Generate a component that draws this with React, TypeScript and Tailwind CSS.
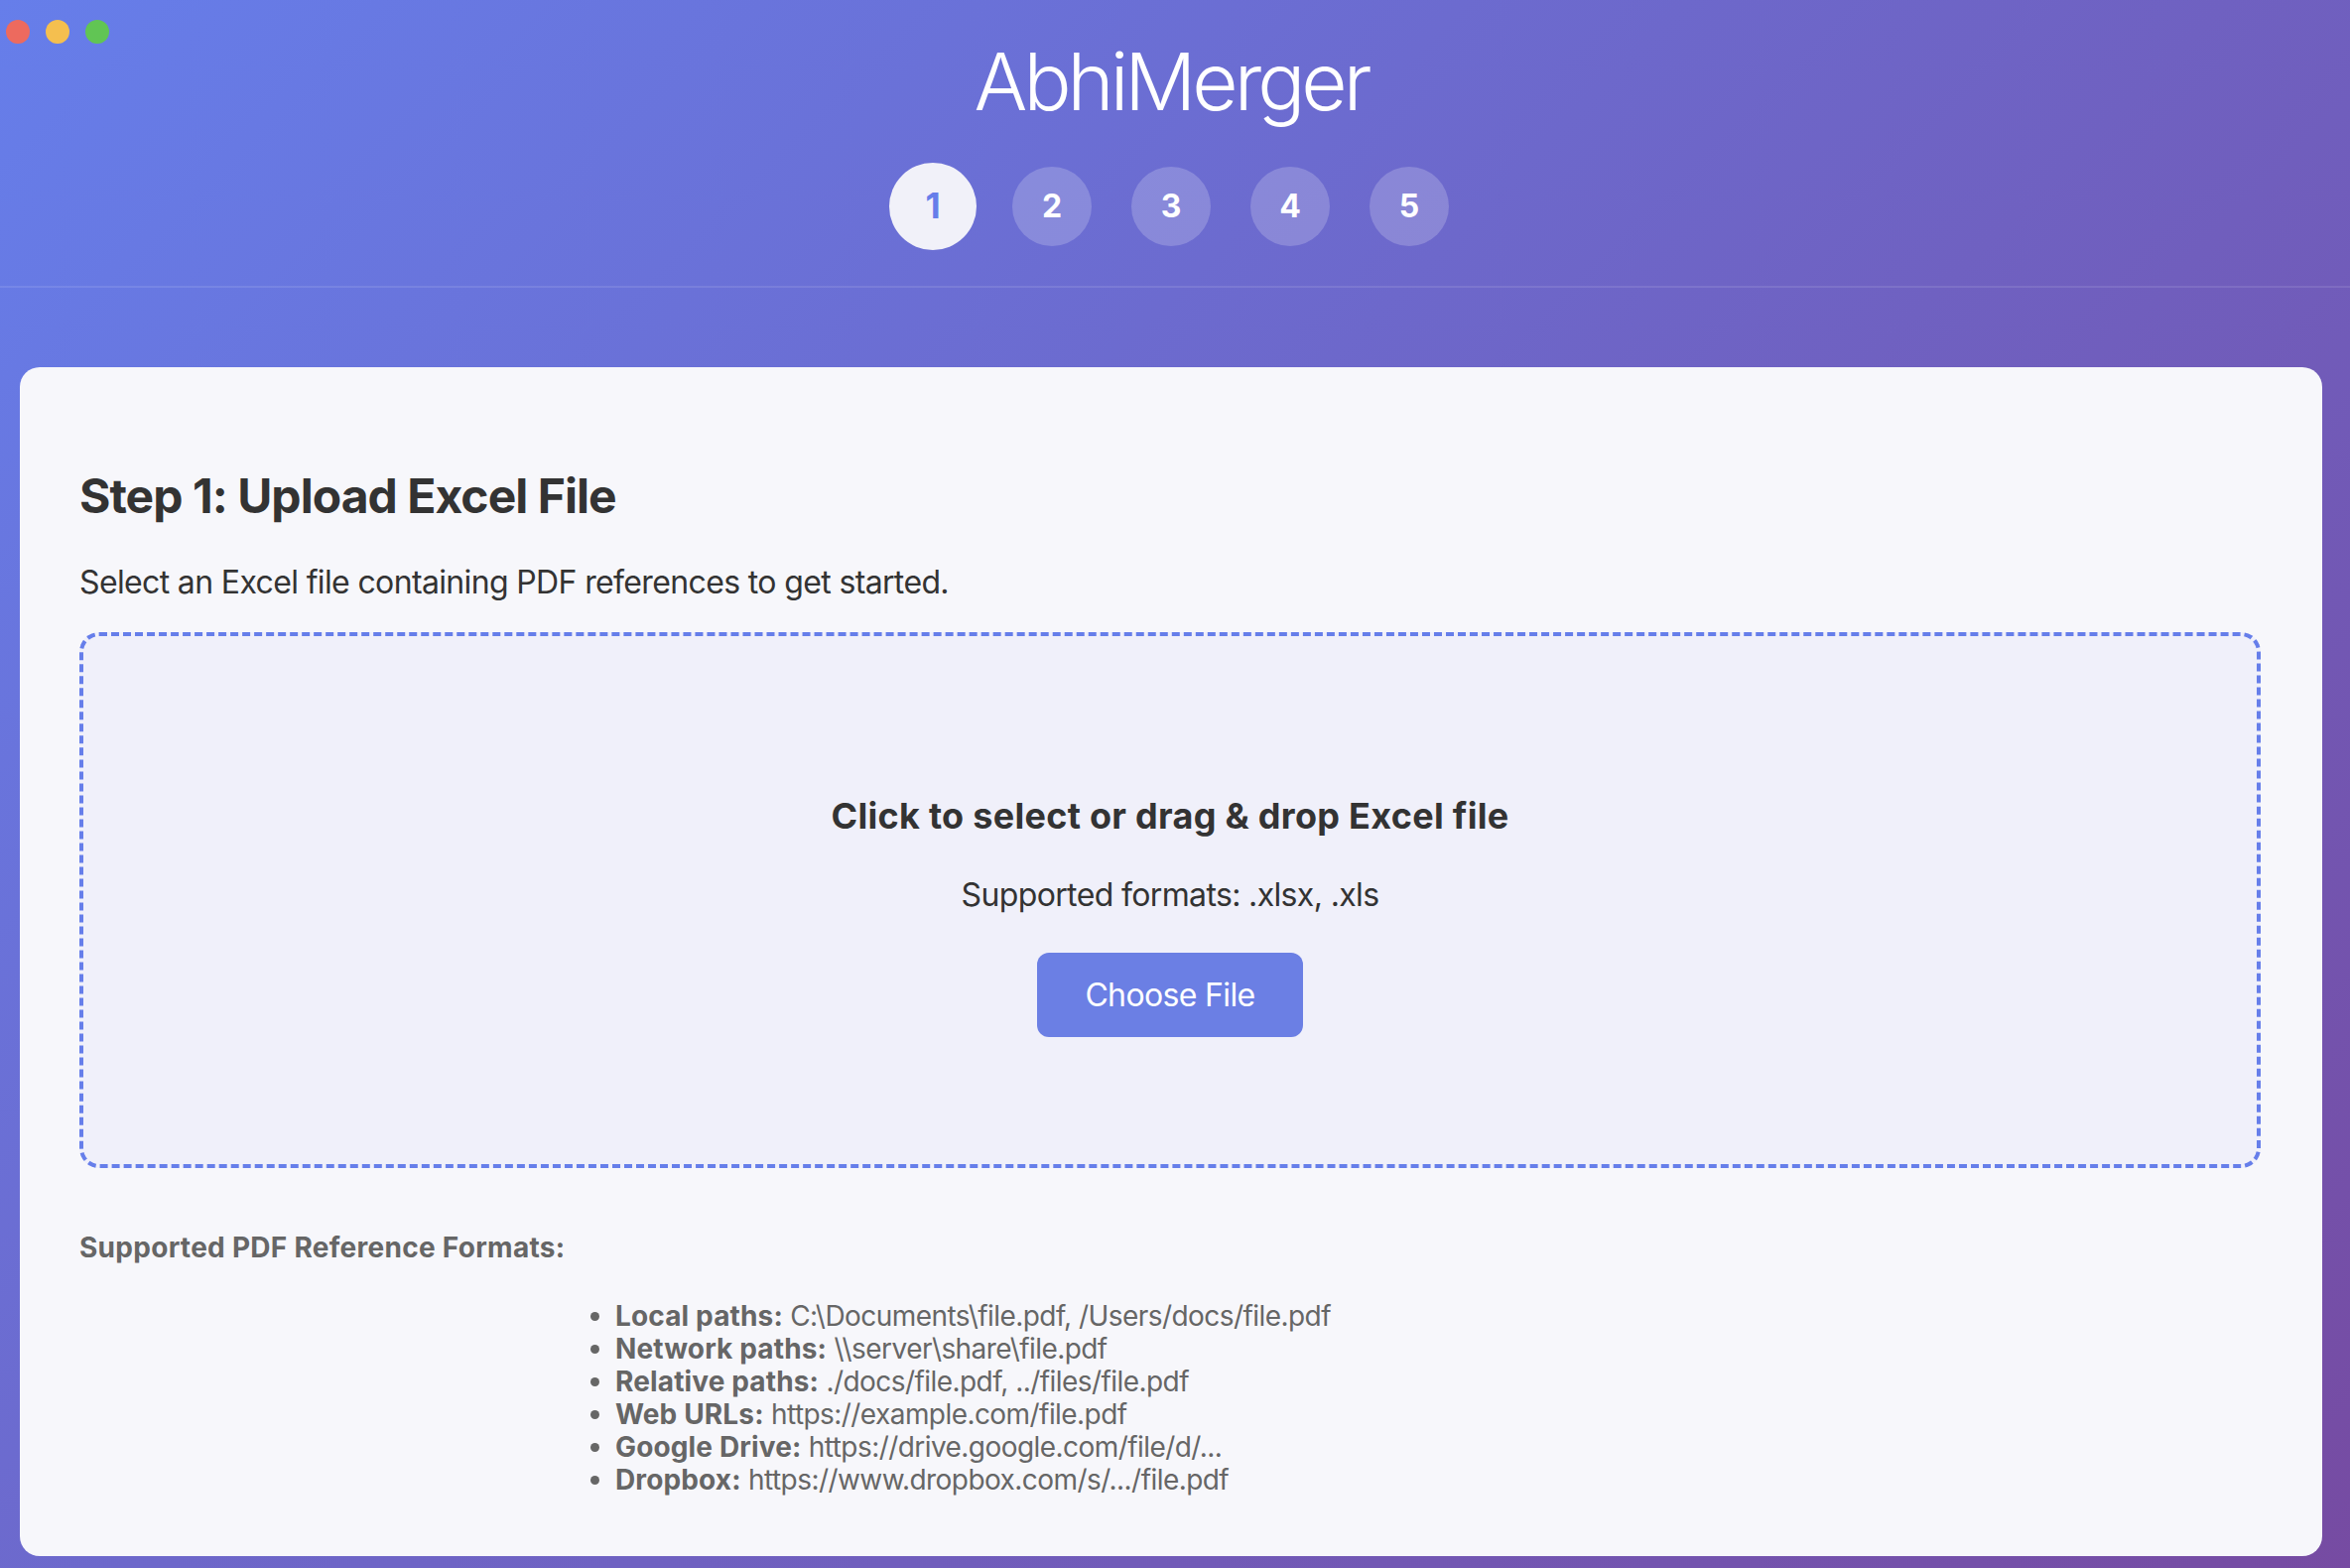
import React from 'react';

// Pasos del asistente
const steps = [1, 2, 3, 4, 5];

// Formatos de referencia soportados
const formats: { label: string; value: string }[] = [
  { label: 'Local paths:', value: 'C:\\Documents\\file.pdf, /Users/docs/file.pdf' },
  { label: 'Network paths:', value: '\\\\server\\share\\file.pdf' },
  { label: 'Relative paths:', value: './docs/file.pdf, ../files/file.pdf' },
  { label: 'Web URLs:', value: 'https://example.com/file.pdf' },
  { label: 'Google Drive:', value: 'https://drive.google.com/file/d/...' },
  { label: 'Dropbox:', value: 'https://www.dropbox.com/s/.../file.pdf' },
];

export default function App() {
  return (
    <div
      className="relative w-full h-[1580px] overflow-hidden bg-[linear-gradient(135deg,#667eea_0%,#764ba2_100%)]"
      style={{ fontFamily: 'Inter, "Noto Sans", sans-serif' }}
    >
      {/* Botones de la ventana */}
      <div className="absolute left-[6px] top-[20px] flex gap-[16px]">
        <span className="w-[24px] h-[24px] rounded-full bg-[#ed6a5e]" />
        <span className="w-[24px] h-[24px] rounded-full bg-[#f5bf4f]" />
        <span className="w-[24px] h-[24px] rounded-full bg-[#61c554]" />
      </div>

      {/* Header */}
      <header className="flex flex-col items-center pr-[8px] pt-[42px] pb-[40px] border-b-2 border-white/10">
        <h1 className="text-[80px] leading-none font-light text-white tracking-[-0.05em]">AbhiMerger</h1>
        <div className="flex gap-[40px] mt-[46px]">
          {steps.map((s) => (
            <div
              key={s}
              className={
                s === 1
                  ? 'w-[80px] h-[80px] rounded-full flex items-center justify-center text-[32px] font-bold bg-[#f1f1f9] text-[#667eea] scale-110'
                  : 'w-[80px] h-[80px] rounded-full flex items-center justify-center text-[32px] font-bold bg-white/20 text-white'
              }
            >
              {s}
            </div>
          ))}
        </div>
      </header>

      {/* Card principal */}
      <main className="pl-[20px] pr-[28px] pt-[80px]">
        <section className="rounded-[20px] bg-[#f7f7fb] pl-[60px] pr-[62px] pt-[101px] pb-[60px]">
          <h2 className="text-[48px] leading-[1.2] font-bold text-[#333] tracking-[-0.02em]">Step 1: Upload Excel File</h2>
          <p className="mt-[34px] text-[32px] leading-[1.5] text-[#333] tracking-[-0.02em]">
            Select an Excel file containing PDF references to get started.
          </p>

          {/* Zona de drop */}
          <div className="mt-[26px] h-[540px] border-4 border-dashed border-[#667eea] rounded-[20px] bg-[#f0f0fa] flex flex-col items-center pt-[160px]">
            <h3 className="text-[36px] leading-[1.2] font-bold text-[#333] tracking-[0.008em]">
              Click to select or drag &amp; drop Excel file
            </h3>
            <p className="mt-[34px] text-[32px] leading-[1.5] text-[#333] tracking-[-0.02em]">Supported formats: .xlsx, .xls</p>
            <button className="mt-[34px] px-[48px] py-[24px] rounded-[12px] bg-[#6b7fe4] text-white text-[32px] leading-[37px] tracking-[-0.02em]">
              Choose File
            </button>
          </div>

          {/* Formatos */}
          <h4 className="mt-[59px] text-[28px] leading-[1.5] font-bold text-[#666] tracking-[0.01em]">
            Supported PDF Reference Formats:
          </h4>
          <ul className="mt-[32px] pl-[540px] list-disc text-[28px] leading-[33px] text-[#666] tracking-[-0.02em]">
            {formats.map((f) => (
              <li key={f.label}>
                <strong className="font-bold tracking-[0.005em]">{f.label}</strong> {f.value}
              </li>
            ))}
          </ul>
        </section>
      </main>
    </div>
  );
}
